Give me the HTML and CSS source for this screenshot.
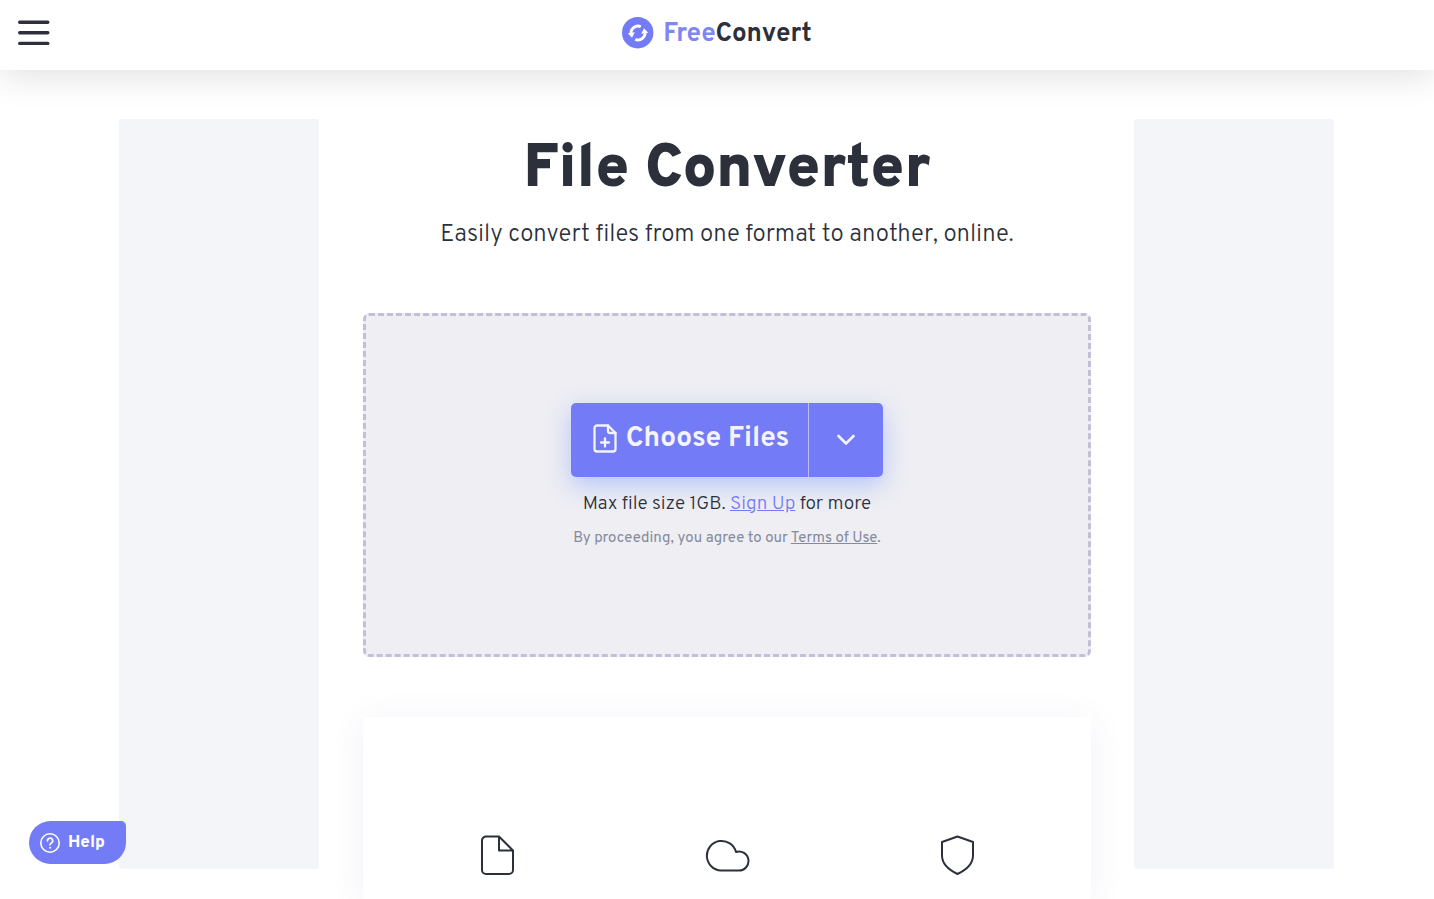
FILE: index.html
```html
<!DOCTYPE html>
<html lang="en">
<head>
    <meta charset="UTF-8">
    <meta name="viewport" content="width=device-width, initial-scale=1.0">
    <title>FreeConvert</title>
    <link rel="stylesheet" href="styles.css">
</head>
<body>
    <header class="header">
        <button type="button" class="menu-btn" aria-label="Menu">
            <svg width="32" height="26" viewBox="0 0 32 26" fill="none" stroke="#2b303b" stroke-width="3.4" stroke-linecap="round">
                <path d="M1.7 2.2H29.8M1.7 12.8H29.8M1.7 23.4H29.8"/>
            </svg>
        </button>
        <a href="#" class="logo">
            <svg width="32" height="32" viewBox="0 0 32 32">
                <circle cx="15.700" cy="15.700" r="15.700" fill="#737bf6"/>
                <g fill="none" stroke="#fff" stroke-width="2.9">
                    <path d="M9.2 17.5A7 7 0 0 1 18.8 9.6"/>
                    <path d="M22.8 14.5A7 7 0 0 1 13.2 22.4"/>
                </g>
                <path d="M5.8 16.2L12.8 15.2L10 20.8ZM26.2 15.8L19.2 16.8L22 11.2Z" fill="#fff"/>
            </svg>
            <span class="logo-text"><span class="logo-free">Free</span>Convert</span>
        </a>
    </header>

    <div class="page">
        <aside class="ad"></aside>

        <main class="main">
            <h1 class="title">File Converter</h1>
            <p class="subtitle">Easily convert files from one format to another, online.</p>

            <section class="dropzone">
                <div class="choose">
                    <button type="button" class="choose-btn">
                        <svg width="24" height="30" viewBox="0 0 24 30" fill="none" stroke="#f3f4ff" stroke-width="2.3" stroke-linecap="round" stroke-linejoin="round">
                            <path d="M15 1.500H4A2.500 2.500 0 0 0 1.500 4V25A2.500 2.500 0 0 0 4 27.500H20A2.500 2.500 0 0 0 22.500 25V9Z"/>
                            <path d="M15 1.500V7A2 2 0 0 0 17 9H22.500"/>
                            <path d="M12 14.500V22.500M8 18.500H16"/>
                        </svg>
                        <span>Choose Files</span>
                    </button>
                    <button type="button" class="choose-more" aria-label="More sources">
                        <svg width="20" height="12" viewBox="0 0 20 12" fill="none" stroke="#f3f4ff" stroke-width="2.6" stroke-linecap="round" stroke-linejoin="round">
                            <path d="M2.5 2L10 9.5L17.5 2"/>
                        </svg>
                    </button>
                </div>
                <p class="size-note">Max file size 1GB. <a href="#">Sign Up</a> for more</p>
                <p class="terms">By proceeding, you agree to our <a href="#">Terms of Use</a>.</p>
            </section>

            <section class="features">
                <div class="feature">
                    <svg width="46" height="46" viewBox="0 0 46 46">
                        <path d="M25 3.500H12A4 4 0 0 0 8 7.500V37A4 4 0 0 0 12 41H35A4 4 0 0 0 39 37V17.500L25 3.500V17.500H39"/>
                    </svg>
                </div>
                <div class="feature">
                    <svg width="46" height="46" viewBox="0 0 46 46">
                        <path d="M17 37.500A14.800 14.800 0 1 1 32 19A9.500 9.500 0 1 1 34.500 37.500Z"/>
                    </svg>
                </div>
                <div class="feature">
                    <svg width="46" height="46" viewBox="0 0 46 46">
                        <path d="M23.500 3.500L39 9V22.500C39 30.500 33 36.500 23.500 41C14 36.500 8 30.500 8 22.500V9Z"/>
                    </svg>
                </div>
            </section>
        </main>

        <aside class="ad"></aside>
    </div>

    <button type="button" class="help-btn">
        <svg width="22" height="22" viewBox="0 0 22 22" fill="none" stroke="#fff" stroke-width="1.6" stroke-linecap="round">
            <circle cx="11" cy="11" r="9.2"/>
            <path d="M8.500 9A2.600 2.600 0 1 1 12.300 11C11.300 11.600 11 12 11 13"/>
            <circle cx="11" cy="15.800" r="0.500" fill="#fff" stroke-width="1"/>
        </svg>
        <span>Help</span>
    </button>
</body>
</html>
```

FILE: styles.css
```css
* {
    box-sizing: border-box;
}
body {
    margin: 0;
    font-family: Overpass, Roboto, sans-serif;
    color: #2b303b;
    background-color: #fff;
}
h1, p {
    margin: 0;
}
button {
    border: none;
    padding: 0;
    font-family: inherit;
    cursor: pointer;
}
svg {
    display: block;
    flex-shrink: 0;
}

/* Header */
.header {
    display: grid;
    grid-template-columns: 1fr auto 1fr;
    align-items: center;
    height: 70px;
    padding: 0 18px 5px;
    background-color: #fff;
    box-shadow: 0 8px 32px rgba(43, 48, 59, 0.13);
}
.menu-btn {
    justify-self: start;
    background: none;
}
.logo {
    display: flex;
    align-items: center;
    gap: 9px;
    color: #2b303b;
    text-decoration: none;
}
.logo-text {
    padding-top: 5px;
    font-size: 26px;
    font-weight: 700;
    line-height: 32px;
}
.logo-free {
    color: #8086f2;
}

/* Columns */
.page {
    display: grid;
    grid-template-columns: 200px 1fr 200px;
    gap: 43px;
    padding: 49px 100px 0 119px;
}
.main {
    padding-left: 1px;
}
.ad {
    height: 750px;
    border-radius: 2px;
    background-color: #f4f5f8;
}
.title {
    margin-top: 17px;
    font-size: 60px;
    font-weight: 900;
    line-height: 70px;
    text-align: center;
}
.subtitle {
    margin-top: 12px;
    font-size: 24px;
    font-weight: 300;
    line-height: 34px;
    text-align: center;
}

/* Upload box */
.dropzone {
    display: flex;
    flex-direction: column;
    align-items: center;
    margin-top: 61px;
    padding: 87px 20px 105px;
    border: 3px dashed #c3bfd8;
    border-radius: 6px;
    background-color: #eeeef3;
}
.choose {
    display: flex;
    height: 74px;
    border-radius: 5px;
    overflow: hidden;
    box-shadow: 0 8px 24px rgba(80, 125, 255, 0.36);
}
.choose-btn, .choose-more {
    display: flex;
    align-items: center;
    justify-content: center;
    background-color: #737bf6;
    color: #f3f4ff;
}
.choose-btn {
    gap: 9px;
    width: 237px;
    padding: 0 0 3px 3px;
    font-size: 28px;
    font-weight: 700;
    white-space: nowrap;
}
.choose-more {
    width: 75px;
    border-left: 1px solid #b9bdfa;
}
.size-note {
    margin-top: 15px;
    font-size: 19px;
    font-weight: 300;
    line-height: 24px;
}
.size-note a {
    color: #737bf6;
}
.terms {
    margin-top: 13px;
    font-size: 15px;
    line-height: 20px;
    color: #858a9e;
}
.terms a {
    color: inherit;
}

/* Features */
.features {
    display: grid;
    grid-template-columns: repeat(3, 230px);
    justify-content: center;
    margin-top: 60px;
    padding: 116px 0 20px;
    background-color: #fff;
    box-shadow: 0 4px 32px rgba(60, 80, 150, 0.08);
}
.feature {
    display: flex;
    justify-content: center;
}
.feature svg {
    fill: none;
    stroke: #2b303b;
    stroke-width: 2;
    stroke-linejoin: round;
}

.help-btn {
    position: fixed;
    left: 29px;
    bottom: 35px;
    display: flex;
    align-items: center;
    gap: 7px;
    height: 43px;
    padding: 0 21px 0 10px;
    border-radius: 22px 5px 22px 22px;
    background-color: #737bf6;
    color: #fff;
    font-size: 17px;
    font-weight: 800;
}
```
